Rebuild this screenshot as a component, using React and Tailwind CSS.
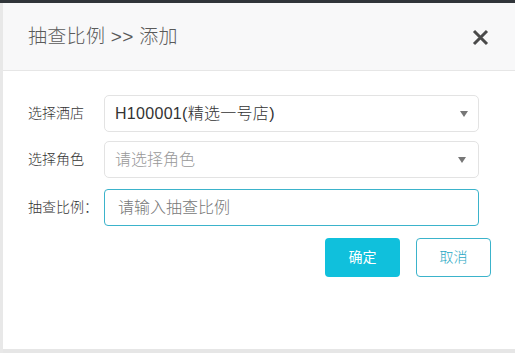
export default function App() {
  const font = { fontFamily: '"Liberation Sans", "Noto Sans CJK SC", sans-serif' };
  return (
    <div className="w-[515px] h-[353px] bg-[#e6e6e6] flex flex-col overflow-hidden" style={font}>
      <div className="h-[3px] bg-[#30353a] shrink-0" />
      <div className="flex-1 flex min-h-0">
        <div className="w-[3px] bg-[#e8e8e8] shrink-0" />
        <div className="flex-1 flex flex-col bg-white mb-[4px]">
          <div className="h-[68px] bg-[#f8f8f9] border-b border-[#e6e6e6] flex items-center justify-between pl-[25px] pr-[26px] pt-[2px] shrink-0">
            <span className="text-[19px] text-[#5a5a5a] font-light tracking-[0.3px]">抽查比例 &gt;&gt; 添加</span>
            <svg width="17" height="17" viewBox="0 0 17 17">
              <path d="M2 2 L15 15 M15 2 L2 15" stroke="#4a4a4a" strokeWidth="3" strokeLinecap="butt" />
            </svg>
          </div>
          <div className="flex flex-col pt-[24px] pl-[25px]">
            <div className="flex items-center h-[37px]">
              <span className="w-[76px] text-[14px] text-[#333] font-light">选择酒店</span>
              <div className="w-[375px] h-[37px] border border-[#e3e3e3] rounded-[5px] flex items-center justify-between pl-[10px] pr-[10px]">
                <span className="text-[16px] text-[#333] font-light tracking-[0.3px]">H100001(精选一号店)</span>
                <span className="w-0 h-0 border-l-[4px] border-r-[4px] border-t-[6px] border-l-transparent border-r-transparent border-t-[#777]" />
              </div>
            </div>
            <div className="flex items-center h-[37px] mt-[9px]">
              <span className="w-[76px] text-[14px] text-[#333] font-light">选择角色</span>
              <div className="w-[375px] h-[37px] border border-[#e3e3e3] rounded-[5px] flex items-center justify-between pl-[10px] pr-[12px]">
                <span className="text-[16px] text-[#999] font-light">请选择角色</span>
                <span className="w-0 h-0 border-l-[4px] border-r-[4px] border-t-[6px] border-l-transparent border-r-transparent border-t-[#777]" />
              </div>
            </div>
            <div className="flex items-center h-[37px] mt-[11px]">
              <span className="w-[76px] text-[14px] text-[#333] font-light">抽查比例：</span>
              <div className="w-[375px] h-[37px] border border-[#3bb3cb] rounded-[4px] flex items-center pl-[13px]">
                <span className="text-[16px] text-[#777] font-light">请输入抽查比例</span>
              </div>
            </div>
            <div className="flex justify-end gap-[16px] mt-[12px] pr-[24px]">
              <div className="w-[75px] h-[39px] rounded-[4px] bg-[#10c0dc] text-white text-[14px] flex items-center justify-center">确定</div>
              <div className="w-[75px] h-[39px] rounded-[4px] border border-[#3bb3cb] bg-white text-[#2aa8c4] text-[14px] font-light flex items-center justify-center">取消</div>
            </div>
          </div>
        </div>
      </div>
    </div>
  );
}
